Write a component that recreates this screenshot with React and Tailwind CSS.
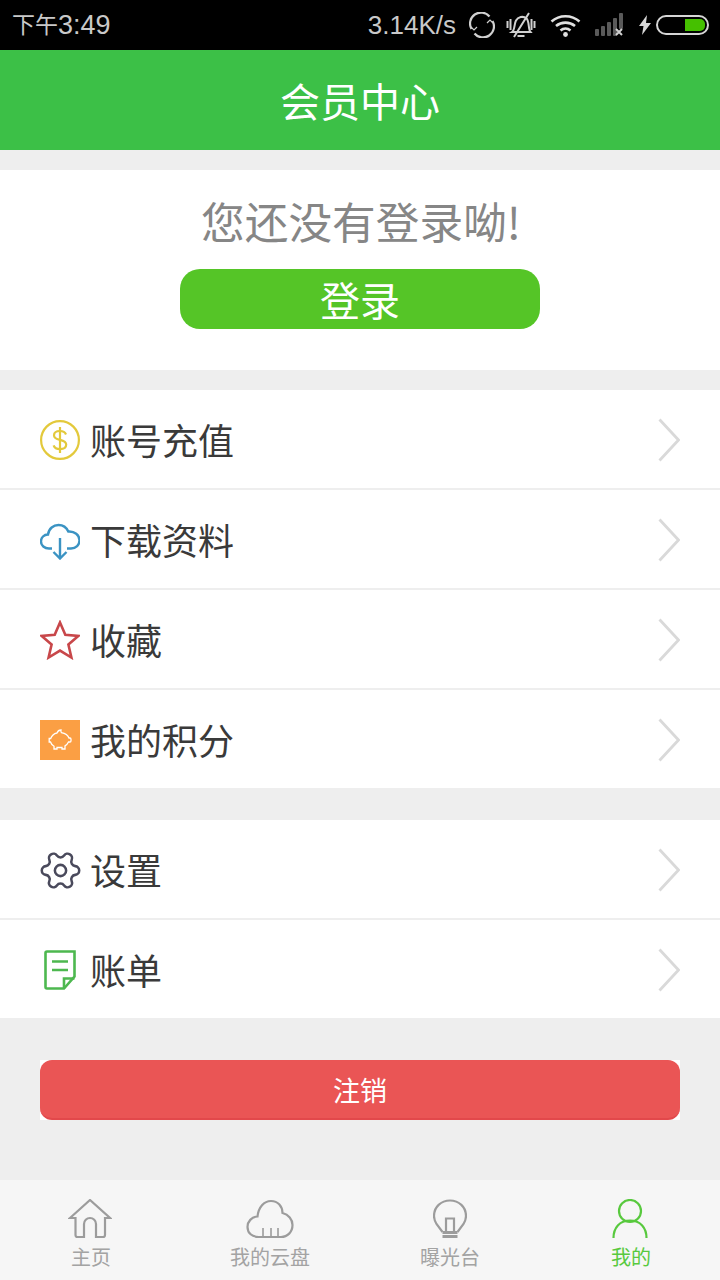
import { Settings } from "lucide-react";

const cjk = { fontFamily: '"Noto Sans CJK SC", "Noto Sans", sans-serif' };

const Chevron = () => (
  <svg className="mt-[2px]" width="22" height="44" viewBox="0 0 22 44" fill="none" stroke="#d9d9d9" strokeWidth="2.800">
    <path d="M1.500 1.500 L20.500 22 L1.500 42.500" />
  </svg>
);

const CoinIcon = () => (
  <svg width="40" height="40" viewBox="0 0 40 40" fill="none" stroke="#e3c93b" strokeWidth="2.200">
    <circle cx="20" cy="20" r="18.900" />
    <path d="M26 14.500c-1-2.500-3.200-3.500-6-3.500-3.500 0-6 1.600-6 4.400 0 6 12.200 3 12.200 9.200 0 3-2.700 4.600-6.200 4.600-3 0-5.500-1.200-6.400-3.800" />
    <path d="M20 7v26" />
  </svg>
);

const CloudIcon = () => (
  <svg width="40" height="40" viewBox="0 0 40 40" fill="none" stroke="#3b93c3" strokeWidth="2.400">
    <path d="M12 28.500H9C4.500 28.500 1 25.500 1 21.500c0-4 3-7 7-7 .8-6 5.500-9.500 10.500-9.500 4.500 0 8 2.500 9.800 6.500 6.200-.5 11.200 3.500 11.200 8.800 0 4.800-3.500 8.200-8.500 8.200H27" />
    <path d="M20 18v20M13.500 32l6.500 6.500 6.500-6.500" />
  </svg>
);

const StarIcon = () => (
  <svg width="40" height="40" viewBox="0 0 40 40" fill="none" stroke="#c8474a" strokeWidth="2.600">
    <path d="M20 2.500l5.300 12.300 13 1.100-9.900 8.600 3 13L20 30.600 8.600 37.500l3-13-9.900-8.600 13-1.100z" />
  </svg>
);

const PiggyIcon = () => (
  <div className="w-10 h-10 bg-[#fb9f44] flex items-center justify-center">
    <svg width="24" height="22" viewBox="0 0 24 22" fill="none" stroke="#fff" strokeWidth="1.300">
      <path d="M5 6c1-1 2.500-1.800 4-2 .6-1.700 2-3 4-3-.2 1 0 2 .4 2.600 3.500.7 6.600 2.700 7.600 5.400h1c.8 0 1 .5 1 1.200v1.600c0 .8-.5 1.200-1 1.200h-1.500c-.8 1.700-2 3-3.500 3.900V20h-3v-1.500H9V20H6v-2.800C4 16 3 14.500 2.500 13H1.200V9.500h1.500C3.200 8.200 4 7 5 6z" />
    </svg>
  </div>
);

const GearIcon = () => (
  <Settings size={45} color="#4a4a5c" strokeWidth={1.350} className="-m-[3px] rotate-90" />
);

const BillIcon = () => (
  <svg width="40" height="40" viewBox="0 0 40 40" fill="none" stroke="#4db84f" strokeWidth="2.600">
    <path d="M7 1.500h27.500v25L24 38.500H7a1.500 1.500 0 0 1-1.500-1.500V3A1.500 1.500 0 0 1 7 1.500z" />
    <path d="M24 38.500V28.500h10.500" />
    <path d="M12 11.500h16M12 20h16" />
  </svg>
);

const HomeIcon = () => (
  <svg width="44" height="40" viewBox="0 0 44 40" fill="none" stroke="#9c9c9c" strokeWidth="2.200">
    <path d="M2 19L22 1l20 18h-5v17a2 2 0 0 1-2 2h-7V25a6 6 0 0 0-12 0v13H9.500a2 2 0 0 1-2-2V19z" />
  </svg>
);

const CloudTabIcon = () => (
  <svg width="48" height="40" viewBox="0 0 48 40" fill="none" stroke="#9c9c9c" strokeWidth="2.200">
    <path d="M13 38C6 38 1.500 34 1.500 28c0-5.500 4-10 10-10.500C12.500 8 18 2 25 2c7 0 11.500 5.500 11.500 12 6 1.500 10 6.500 10 12 0 7-5 12-11.500 12z" />
    <path d="M17 29v9M25 29v9M32 29v9" strokeWidth="1.600" />
  </svg>
);

const BulbIcon = () => (
  <svg width="34" height="40" viewBox="0 0 34 40" fill="none" stroke="#9c9c9c" strokeWidth="2.200">
    <path d="M9.500 33L3.500 25C2 22.500 1 20 1 17 1 8 8 1.500 17 1.500S33 8 33 17c0 3-1 5.500-2.500 8L24.500 33" />
    <path d="M13 33V19.500h8V33" />
    <path d="M9.500 33.500h15M9.500 37.500h15" strokeWidth="3" />
  </svg>
);

const UserIcon = () => (
  <svg width="38" height="40" viewBox="0 0 38 40" fill="none" stroke="#58c93e" strokeWidth="2.200">
    <circle cx="19" cy="12" r="11" />
    <path d="M2.500 39c0-10 6-17.500 16.500-17.500S35.500 29 35.500 39" />
  </svg>
);

const Row = ({ icon, label, last }) => (
  <div className={`flex items-center bg-white pl-10 pr-10 ${last ? "h-[98px]" : "h-[100px] border-b-2 border-[#eeeeee]"}`}>
    <div className="mt-[2px] w-10 h-10 flex items-center justify-center shrink-0">{icon}</div>
    <span className="ml-[10px] text-[36px] leading-none text-[#3a3a3a] flex-1" style={cjk}>
      {label}
    </span>
    <Chevron />
  </div>
);

const StatusBar = () => (
  <div className="h-[50px] bg-black flex items-center pl-3 pr-[11px] text-[#c9c9c9] text-[26px]">
    <span className="flex items-center" style={{ fontFamily: '"Liberation Sans", "Noto Sans CJK SC", sans-serif' }}>
      <span className="text-[23px]">下午</span>
      <span className="text-[27px]">3:49</span>
    </span>
    <span className="ml-auto" style={{ fontFamily: '"Liberation Sans", sans-serif' }}>3.14K/s</span>
    <svg className="ml-[13px]" width="26" height="26" viewBox="0 0 26 26" fill="none" stroke="#d0d0d0" strokeWidth="2.200">
      <path d="M2.500 17A11 11 0 0 1 20.500 4.500M23.500 9A11 11 0 0 1 5.500 21.500" />
      <path d="M2 15l3 3 3-3M24 11l-3-3-3 3" strokeWidth="1.200" />
    </svg>
    <svg className="ml-[11px]" width="30" height="26" viewBox="0 0 30 26" fill="none" stroke="#d0d0d0" strokeWidth="2">
      <path d="M6 20c3-2 2-8 4-11.500C12 5 17 3.500 20.500 6.500 23.500 9 22 17 24.500 20z" />
      <path d="M11.500 24h7M8 25L23 1M1.500 9v7M4.500 7v11M25.500 7v11M28.500 9v7" />
    </svg>
    <svg className="ml-[14px]" width="31" height="24" viewBox="0 0 31 24" fill="none" stroke="#e0e0e0" strokeWidth="2.600">
      <path d="M1.500 8.500c8-7 20-7 28 0M6 13c5.500-4.500 13.500-4.500 19 0M10.500 17.500c3-2.500 7-2.500 10 0" />
      <circle cx="15.500" cy="21.500" r="2.400" fill="#e0e0e0" stroke="none" />
    </svg>
    <svg className="ml-[14px]" width="30" height="24" viewBox="0 0 30 24" fill="#5a5a5a">
      <rect x="0" y="16" width="4" height="7" rx="1" />
      <rect x="6" y="13" width="4" height="10" rx="1" />
      <rect x="12" y="9" width="4" height="14" rx="1" />
      <rect x="18" y="5" width="4" height="18" rx="1" />
      <rect x="24" y="0" width="4" height="16" rx="1" />
      <path d="M21 16l6 6M27 16l-6 6" stroke="#d0d0d0" strokeWidth="2" />
    </svg>
    <svg className="ml-[14px]" width="12" height="20" viewBox="0 0 12 20" fill="#d8d8d8">
      <path d="M8 0L0 11h4.500L3 20l9-12H7z" />
    </svg>
    <div className="ml-[5px] w-[53px] h-5 rounded-full border-2 border-[#d5d5d5] flex items-center justify-end pr-[2px]">
      <div className="w-5 h-3 bg-[#45c000] rounded-r-[5px]" />
    </div>
  </div>
);

const Tab = ({ icon, label, active, nudge }) => (
  <div className="flex-1 flex flex-col items-center">
    <div className="h-10 mt-[19px] flex items-center justify-center">{icon}</div>
    <span
      className={`mt-1 text-[20px] leading-[28px] ${nudge ? "ml-[2px]" : ""} ${active ? "text-[#58c93e]" : "text-[#a3a3a3]"}`}
      style={cjk}
    >
      {label}
    </span>
  </div>
);

const App = () => {
  return (
    <div className="w-[720px] h-[1280px] bg-[#eeeeee] flex flex-col overflow-hidden" style={cjk}>
      <StatusBar />
      <div className="h-[100px] bg-[#3cc047] flex items-center justify-center text-white text-[40px]">会员中心</div>

      <div className="mt-5 h-[200px] bg-white flex flex-col items-center">
        <div className="mt-[23px] ml-[2px] text-[43.7px] leading-[54px] text-[#868686]">您还没有登录呦!</div>
        <div className="mt-[22px] w-[360px] h-[60px] rounded-[20px] bg-[#55c527] flex items-center justify-center text-white text-[40px]">
          登录
        </div>
      </div>

      <div className="mt-5">
        <Row icon={<CoinIcon />} label="账号充值" />
        <Row icon={<CloudIcon />} label="下载资料" />
        <Row icon={<StarIcon />} label="收藏" />
        <Row icon={<PiggyIcon />} label="我的积分" last />
      </div>

      <div className="mt-8">
        <Row icon={<GearIcon />} label="设置" />
        <Row icon={<BillIcon />} label="账单" last />
      </div>

      <div className="flex-1 flex items-start px-10 pt-[42px]">
        <div className="w-full h-[60px] bg-white">
          <div className="h-full pt-[2px] rounded-[12px] bg-[#ea5555] border-b-2 border-[#e2484b] flex items-center justify-center text-white text-[27px]">
            注销
          </div>
        </div>
      </div>

      <div className="h-[100px] bg-[#f6f6f6] flex">
        <Tab icon={<HomeIcon />} label="主页" nudge />
        <Tab icon={<CloudTabIcon />} label="我的云盘" />
        <Tab icon={<BulbIcon />} label="曝光台" />
        <Tab icon={<UserIcon />} label="我的" active nudge />
      </div>
    </div>
  );
};

export default App;
